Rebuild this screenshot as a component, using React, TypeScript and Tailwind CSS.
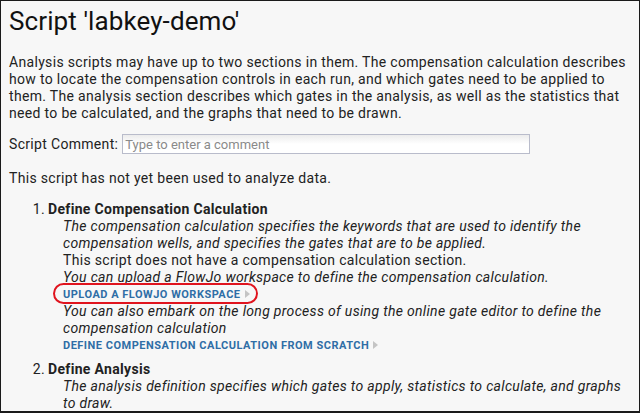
import React from "react";

const Arrow = () => (
  <svg width="5" height="8" viewBox="0 0 5 8" className="inline-block ml-[4px] align-[0px]">
    <path d="M0 0 L5 4 L0 8 Z" fill="#c4c4c4" />
  </svg>
);

export default function App() {
  return (
    <div
      className="w-[640px] h-[413px] overflow-hidden bg-[#f7f7f7] border border-b-2 border-[#1a1a1a] text-[#222] text-[14px] leading-[17px] tracking-[0.32px]"
      style={{ fontFamily: "Roboto, 'Noto Sans', sans-serif" }}
    >
      <div className="pl-[8px] pr-[8px]">
        <h1 className="text-[26px] leading-[32px] font-normal mt-[4px] text-[#111] tracking-[0.1px]">Script 'labkey-demo'</h1>
        <p className="mt-[17px]">
          Analysis scripts may have up to two sections in them. The compensation calculation describes how to locate the
          compensation controls in each run, and which gates need to be applied to them. The analysis section describes
          which gates in the analysis, as well as the statistics that need to be calculated, and the graphs that need to be
          drawn.
        </p>
        <div className="flex items-center mt-[12px] h-[20px]">
          <span>Script Comment:</span>
          <div className="ml-[4px] w-[408px] h-[20px] border border-[#b9bccb] bg-gradient-to-b from-[#ececec] via-white to-white flex items-center pl-[2px] text-[13px] text-[#8a8a8a] tracking-normal">
            Type to enter a comment
          </div>
        </div>
        <p className="mt-[16px]">This script has not yet been used to analyze data.</p>
        <div className="mt-[14px]">
          <div className="flex">
            <span className="w-[38px] text-right pr-[2px]">1.</span>
            <span className="font-bold ml-[1px]">Define Compensation Calculation</span>
          </div>
          <div className="ml-[54px]">
            <p className="italic">
              The compensation calculation specifies the keywords that are used to identify the compensation wells, and
              specifies the gates that are to be applied.
            </p>
            <p>This script does not have a compensation calculation section.</p>
            <p className="italic">You can upload a FlowJo workspace to define the compensation calculation.</p>
            <div className="relative h-[17px] flex items-center">
              <span className="text-[11px] font-bold tracking-[0.5px] text-[#2f6ea6]">
                UPLOAD A FLOWJO WORKSPACE
                <Arrow />
              </span>
              <div className="absolute left-[-10px] top-[-3px] w-[205px] h-[21px] border-2 border-[#e0141e] rounded-[11px]" />
            </div>
            <p className="italic">
              You can also embark on the long process of using the online gate editor to define the compensation
              calculation
            </p>
            <div className="h-[17px] flex items-center">
              <span className="text-[11px] font-bold tracking-[0.5px] text-[#2f6ea6]">
                DEFINE COMPENSATION CALCULATION FROM SCRATCH
                <Arrow />
              </span>
            </div>
          </div>
          <div className="flex mt-[7px]">
            <span className="w-[38px] text-right pr-[2px]">2.</span>
            <span className="font-bold ml-[1px]">Define Analysis</span>
          </div>
          <div className="ml-[54px]">
            <p className="italic">
              The analysis definition specifies which gates to apply, statistics to calculate, and graphs to draw.
            </p>
          </div>
        </div>
      </div>
    </div>
  );
}
